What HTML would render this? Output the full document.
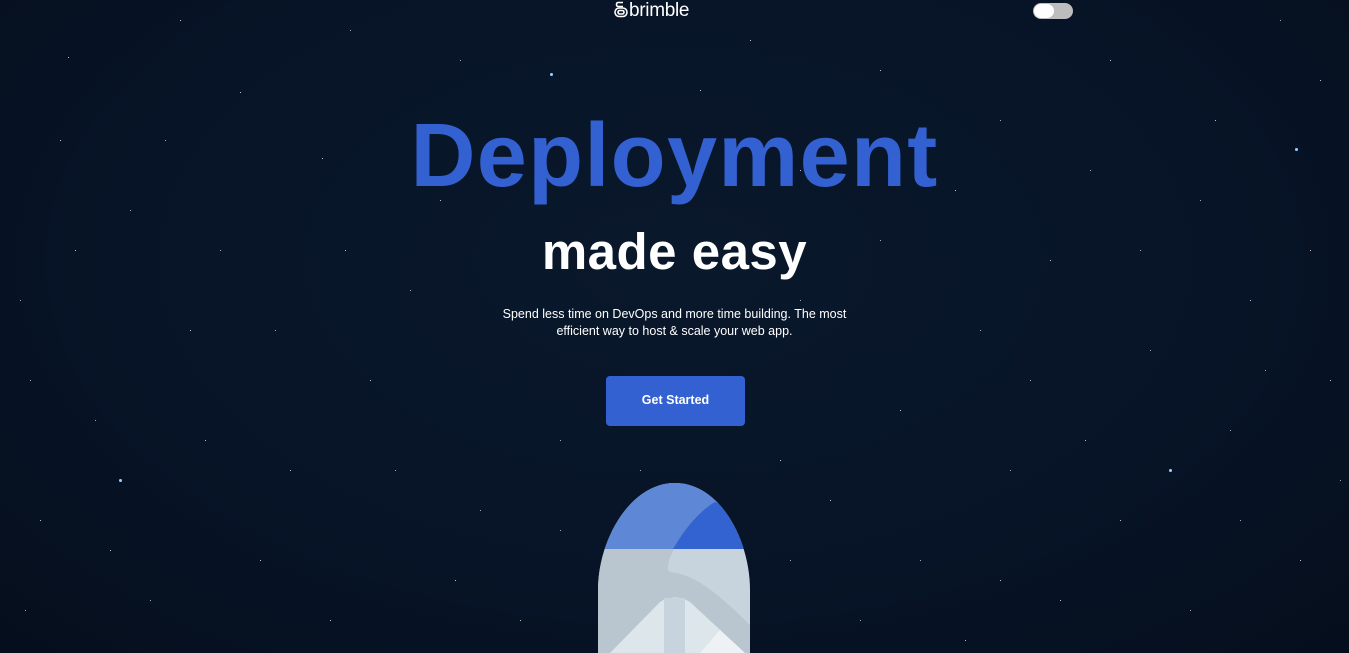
<!DOCTYPE html>
<html><head><meta charset="utf-8"><style>
html,body{margin:0;padding:0;width:1349px;height:653px;overflow:hidden;background:#061020;font-family:"Liberation Sans",sans-serif;}
body{background:radial-gradient(ellipse at 50% 40%,#0a182c 0%,#071427 60%,#050e1c 100%);position:relative}
.stars{position:absolute;left:0;top:0;width:1px;height:1px;background:transparent;border-radius:50%}
.logo{position:absolute;left:614px;top:0px;color:#fff;font-size:19px;letter-spacing:-0.3px}
.toggle{position:absolute;left:1033px;top:3px;width:40px;height:16px;border-radius:8px;background:#bdbdbd}
.toggle:after{content:"";position:absolute;left:1px;top:1px;width:20px;height:14px;border-radius:7px;background:#fff}
h1{position:absolute;left:0;width:1349px;top:105px;margin:0;text-align:center;color:#3361d1;font-size:90px;font-weight:bold;letter-spacing:1.3px}
h2{position:absolute;left:0;width:1349px;top:222px;margin:0;text-align:center;color:#fff;font-size:51px;font-weight:bold;letter-spacing:0.5px}
p{position:absolute;left:0;width:1349px;top:306px;margin:0;text-align:center;color:#fff;font-size:12.5px;line-height:17px}
.btn{position:absolute;left:606px;top:376px;width:139px;height:50px;background:#3361d1;border-radius:4px;color:#fff;font-size:12.5px;font-weight:bold;text-align:center;line-height:48px}
</style></head><body>
<div class="stars" style="box-shadow:
551px 74px 0 1px #9cf,1296px 149px 0 1px #9cf,240px 92px #fff,68px 57px #fff,130px 210px #cde,322px 158px #fff,410px 290px #cde,190px 330px #fff,95px 420px #cde,290px 470px #fff,40px 520px #fff,150px 600px #cde,260px 560px #fff,480px 510px #cde,370px 380px #fff,460px 60px #cde,750px 40px #fff,880px 70px #fff,1000px 120px #cde,1110px 60px #fff,1200px 200px #cde,1320px 80px #fff,1250px 300px #fff,1150px 350px #cde,1050px 260px #fff,980px 330px #cde,900px 410px #fff,1010px 470px #cde,1120px 520px #fff,1230px 430px #cde,1300px 560px #fff,1190px 610px #cde,1060px 600px #fff,920px 560px #cde,830px 500px #fff,860px 620px #cde,520px 620px #fff,20px 300px #cde,60px 140px #fff,350px 30px #cde,180px 20px #fff,1280px 20px #cde,1330px 380px #fff,1090px 170px #cde,780px 460px #fff,560px 440px #cde,440px 200px #fff,880px 240px #cde,1170px 470px 0 1px #9cf,700px 90px #fff,640px 470px #cde,330px 620px #fff,220px 250px #cde,120px 480px 0 1px #9cf,1000px 580px #fff,1240px 520px #cde,
30px 380px #cde,75px 250px #fff,165px 140px #cde,205px 440px #fff,275px 330px #cde,345px 250px #fff,395px 470px #cde,505px 160px #fff,25px 610px #cde,110px 550px #fff,800px 300px #cde,955px 190px #fff,1030px 380px #cde,1085px 440px #fff,1140px 250px #cde,1215px 120px #fff,1265px 370px #cde,1310px 250px #fff,1340px 480px #cde,965px 640px #fff,790px 560px #cde,455px 580px #fff,560px 530px #cde,800px 170px #fff;"></div>
<div class="logo"><svg width="15" height="17" viewBox="0 0 15 17" style="vertical-align:-2px"><g fill="none" stroke="#fff" stroke-width="1.6"><path d="M4 1.5h5M4 1.5c-2 0-2 4 0 4h5"/><rect x="1" y="7" width="12" height="8.5" rx="4.2"/><rect x="4" y="9.5" width="6" height="3.5" rx="1.7"/></g></svg>brimble</div>
<div class="toggle"></div>
<h1>Deployment</h1>
<h2>made easy</h2>
<p>Spend less time on DevOps and more time building. The most<br>efficient way to host &amp; scale your web app.</p>
<div class="btn">Get Started</div>
<svg style="position:absolute;left:0;top:0" width="1349" height="653">
<defs><clipPath id="r"><path d="M598 653 L598 590 C598 540 630 483 675 483 C720 483 750 540 750 590 L750 653Z"/></clipPath></defs>
<g clip-path="url(#r)">
<rect x="590" y="480" width="170" height="180" fill="#c8d4dd"/>
<rect x="590" y="480" width="170" height="69" fill="#5e87d6"/>
<path d="M673 549 C690 520 705 508 715 502 L760 520 L760 549Z" fill="#3363d0"/>
<path d="M590 549 H674 C668 560 666 570 670 572 C690 574 710 585 750 625 L760 653 H590Z" fill="#b9c5cf"/>
<path d="M610 653 L660 602 C670 596 680 596 690 602 L745 653Z" fill="#dde6ea"/>
<rect x="664" y="598" width="21" height="60" fill="#c8d4dd"/>
<path d="M700 653 L720 630 L745 653Z" fill="#eef2f4"/>
</g></svg>
</body></html>
